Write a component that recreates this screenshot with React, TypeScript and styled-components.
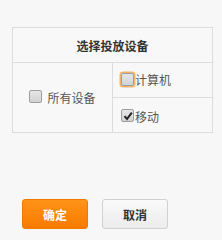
import React from 'react';
import styled, { createGlobalStyle } from "styled-components";

const GlobalStyle = createGlobalStyle`
  html, body {
    margin: 0;
    padding: 0;
    background: #f7f7f7;
    font-family: "Noto Sans CJK SC", "Noto Sans", sans-serif;
    font-size: 12px;
    color: #555;
  }
`;

const Page = styled.div`
  width: 222px;
  height: 240px;
  padding-top: 27px;
  box-sizing: border-box;
`;

const DeviceTable = styled.table`
  margin-left: 12px;
  width: 201px;
  border-collapse: collapse;
  table-layout: fixed;
  background: #f8f8f8;

  td, th {
    border: 1px solid #dcdcdc;
    height: 34px;
    padding: 0;
  }
`;

const HeadCell = styled.th`
  font-size: 12px;
  font-weight: bold;
  color: #333;
  text-align: center;
`;

const LeftCell = styled.td`
  width: 109px;
  text-align: center;
`;

const RightCell = styled.td`
  padding-left: 8px !important;
`;

const Option = styled.label<{ gap?: string }>`
  display: inline-flex;
  align-items: center;
  gap: ${props => props.gap || '1px'};
  color: #555;
  line-height: 1;
`;

const Box = styled.span<{ focused?: boolean }>`
  position: relative;
  width: 11px;
  height: 11px;
  border: 1px solid #9e9e9e;
  border-radius: 2px;
  background: linear-gradient(#e6e6e6, #d2d2d2);
  box-shadow: ${props => props.focused ? '0 0 0 1.5px #f3b46a' : 'none'};
  display: inline-flex;
  align-items: center;
  justify-content: center;
  margin-top: -2px;
`;

const Check = styled.svg`
  width: 10px;
  height: 10px;
`;

const Buttons = styled.div`
  display: flex;
  gap: 14px;
  margin: 66px 0 0 22px;
`;

const Button = styled.button<{ primary?: boolean }>`
  width: 66px;
  height: 30px;
  border-radius: 3px;
  font-family: "Noto Sans CJK SC", sans-serif;
  font-size: 12px;
  font-weight: bold;
  cursor: pointer;
  border: 1px solid ${props => props.primary ? '#f07a00' : '#d0d0d0'};
  color: ${props => props.primary ? '#fff' : '#333'};
  background: ${props => props.primary
    ? 'linear-gradient(#ff9318, #f87a00)'
    : 'linear-gradient(#fafafa, #ececec)'};
`;

const CheckBox = ({ checked, focused }: { checked?: boolean; focused?: boolean }) => (
  <Box focused={focused}>
    {checked && (
      <Check viewBox="0 0 10 10">
        <path d="M1.5 5.2 L4 8 L8.8 1.6" fill="none" stroke="#222" strokeWidth="2" />
      </Check>
    )}
  </Box>
);

export default function App() {
  return (
    <Page>
      <GlobalStyle />
      <DeviceTable>
        <thead>
          <tr>
            <HeadCell colSpan={2}>选择投放设备</HeadCell>
          </tr>
        </thead>
        <tbody>
          <tr>
            <LeftCell rowSpan={2}>
              <Option gap="5px"><CheckBox />所有设备</Option>
            </LeftCell>
            <RightCell>
              <Option><CheckBox focused />计算机</Option>
            </RightCell>
          </tr>
          <tr>
            <RightCell>
              <Option><CheckBox checked />移动</Option>
            </RightCell>
          </tr>
        </tbody>
      </DeviceTable>
      <Buttons>
        <Button primary>确定</Button>
        <Button>取消</Button>
      </Buttons>
    </Page>
  );
}
